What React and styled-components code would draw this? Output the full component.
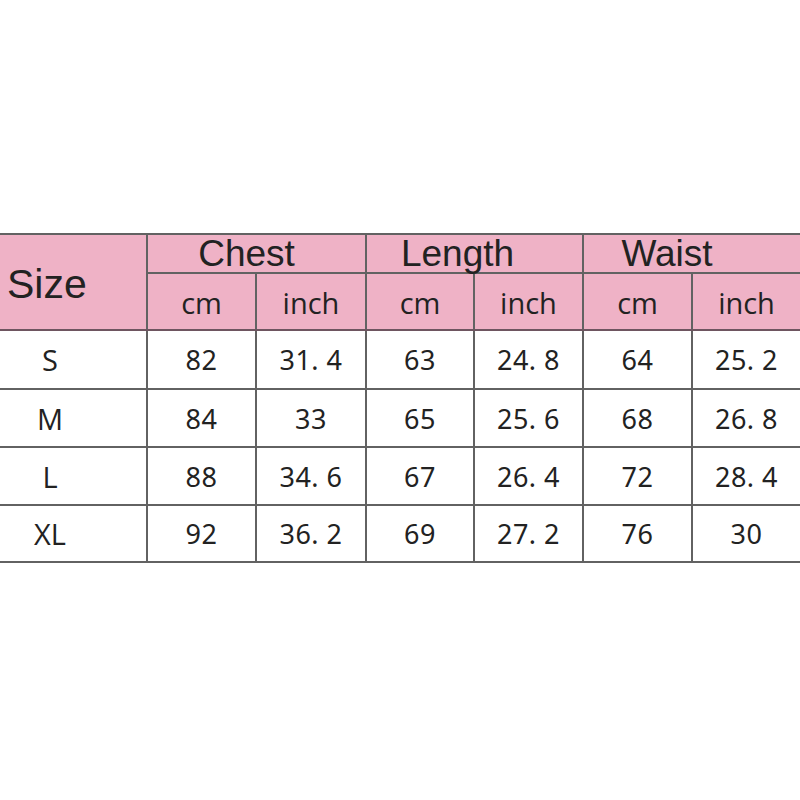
import React from "react";
import styled, { createGlobalStyle } from "styled-components";

const Global = createGlobalStyle`
  html, body { margin: 0; padding: 0; background: #ffffff; }
  body { width: 800px; height: 800px; overflow: hidden; }
`;

const Page = styled.div`
  width: 800px;
  height: 800px;
  padding-top: 233px;
  box-sizing: border-box;
  background: #ffffff;
`;

const Table = styled.table`
  width: 800px;
  table-layout: fixed;
  border-collapse: collapse;
  color: #222222;
  border-top: 2px solid #6e5560;
  border-bottom: 2px solid #555555;
`;

const Col = styled.col`
  width: ${(p) => p.$w}px;
`;

const HeadRow = styled.tr`
  height: ${(p) => p.$h}px;
  background: #efb2c6;
`;

const BodyRow = styled.tr`
  height: ${(p) => p.$h}px;
  background: #ffffff;
`;

const Cell = styled.td`
  padding: 0;
  border: 2px solid #626262;
  &:first-child { border-left: none; }
  &:last-child { border-right: none; }
  text-align: center;
  vertical-align: middle;
  line-height: 1;
`;

const SizeHead = styled(Cell)`
  text-align: left;
  padding-left: 7px;
  font-family: "Liberation Sans", Arial, sans-serif;
  font-size: 41px;
  padding-top: 4px;
  border-bottom-color: #6e5560;
`;

const GroupHead = styled(Cell)`
  font-family: "Liberation Sans", Arial, sans-serif;
  font-size: 37px;
  vertical-align: bottom;
  padding-bottom: 0px;
  padding-right: ${(p) => p.$offset || 0}px;
  &:last-child { border-right: none; }
`;

const UnitHead = styled(Cell)`
  font-family: "Open Sans", "Noto Sans", sans-serif;
  font-size: 29px;
  padding-top: 2px;
  border-bottom-color: #6e5560;
`;

const SizeCell = styled(Cell)`
  font-family: "Open Sans", "Noto Sans", sans-serif;
  font-size: 29px;
  padding-right: 46px;
`;

const NumCell = styled(Cell)`
  font-family: "Noto Sans", "Open Sans", sans-serif;
  font-size: 27px;
  letter-spacing: 0.5px;
`;

const widths = [147, 109, 110, 108, 109, 109, 108];

const rows = [
  ["S", "82", "31. 4", "63", "24. 8", "64", "25. 2"],
  ["M", "84", "33", "65", "25. 6", "68", "26. 8"],
  ["L", "88", "34. 6", "67", "26. 4", "72", "28. 4"],
  ["XL", "92", "36. 2", "69", "27. 2", "76", "30"],
];

const rowHeights = [59, 58, 58, 57];

const groups = [
  { name: "Chest", offset: 20 },
  { name: "Length", offset: 34 },
  { name: "Waist", offset: 50 },
];

export default function App() {
  return (
    <>
      <Global />
      <Page>
        <Table>
          <colgroup>
            {widths.map((w, i) => (
              <Col key={i} $w={w} />
            ))}
          </colgroup>
          <tbody>
            <HeadRow $h={39}>
              <SizeHead rowSpan={2}>Size</SizeHead>
              {groups.map((g) => (
                <GroupHead key={g.name} colSpan={2} $offset={g.offset}>
                  {g.name}
                </GroupHead>
              ))}
            </HeadRow>
            <HeadRow $h={57}>
              {groups.map((g) => (
                <React.Fragment key={g.name}>
                  <UnitHead>cm</UnitHead>
                  <UnitHead>inch</UnitHead>
                </React.Fragment>
              ))}
            </HeadRow>
            {rows.map((r, i) => (
              <BodyRow key={r[0]} $h={rowHeights[i]}>
                <SizeCell>{r[0]}</SizeCell>
                {r.slice(1).map((v, j) => (
                  <NumCell key={j}>{v}</NumCell>
                ))}
              </BodyRow>
            ))}
          </tbody>
        </Table>
      </Page>
    </>
  );
}
